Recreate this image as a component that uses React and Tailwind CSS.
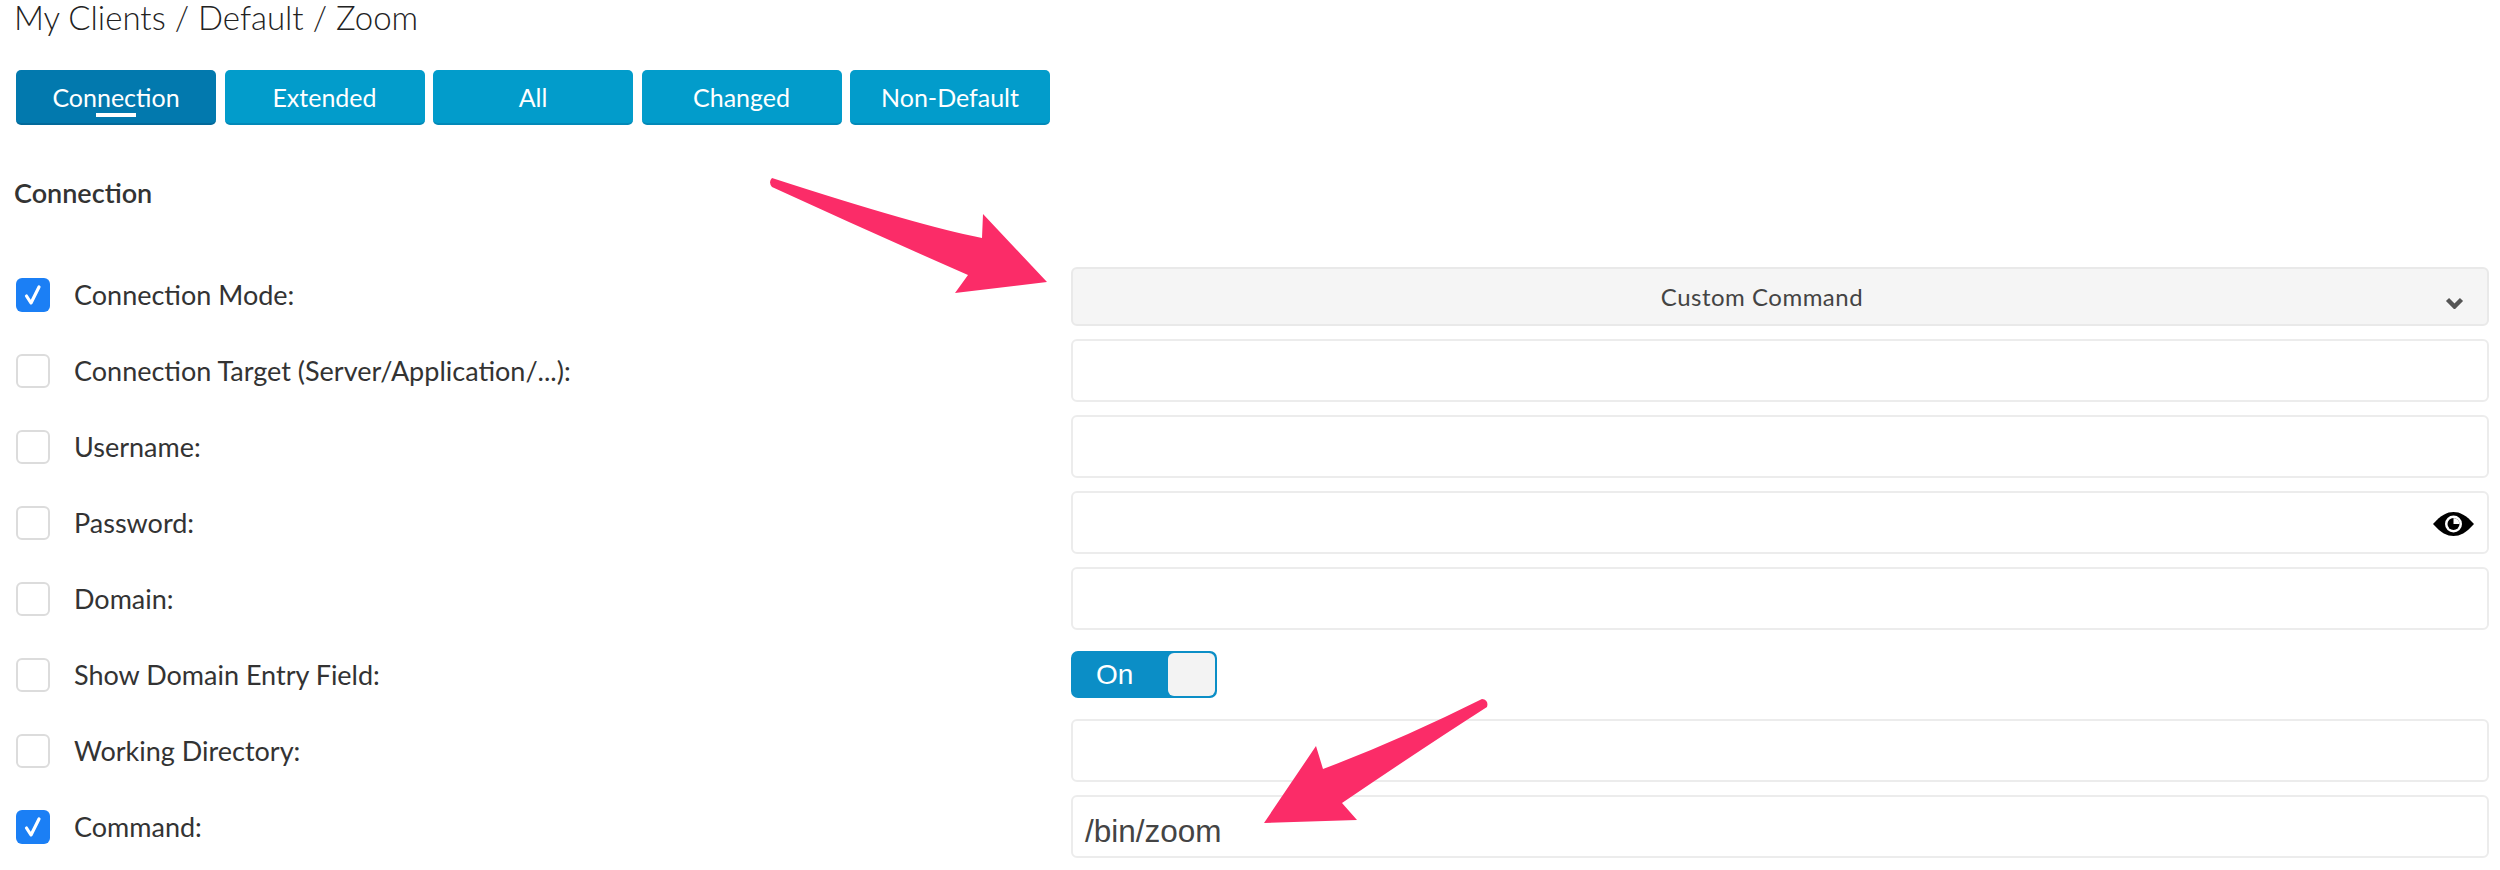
import React from "react";

const tabs = ["Connection", "Extended", "All", "Changed", "Non-Default"];

const Check = ({ checked }) => (
  <div
    className={`w-[34px] h-[34px] shrink-0 rounded-[6px] flex items-center justify-center ${
      checked ? "bg-[#1b7ff5]" : "bg-white border-2 border-[#dcdcdc]"
    }`}
  >
    {checked && (
      <svg width="20" height="22" viewBox="0 0 20 22" fill="none">
        <path d="M3.5 12 L8 19 L16 3" stroke="#fff" strokeWidth="3.2" strokeLinecap="round" strokeLinejoin="round" />
      </svg>
    )}
  </div>
);

const Field = ({ children }) => (
  <div className="h-[63px] flex-1 rounded-[6px] border-2 border-[#ececec] bg-white flex items-center relative">
    {children}
  </div>
);

const Row = ({ label, checked, children }) => (
  <div className="flex items-center h-[63px] mb-[13px]">
    <Check checked={checked} />
    <div className="w-[1021px] pl-[24px] shrink-0 text-[27px] leading-none text-[#333]">{label}</div>
    <div className="flex-1 flex items-center">{children}</div>
  </div>
);

const Eye = () => (
  <svg className="absolute right-[13px] top-[19px]" width="41" height="24" viewBox="0 0 41 24">
    <path d="M0 12 C8 3 14 0 20.5 0 C27 0 33 3 41 12 C33 21 27 24 20.5 24 C14 24 8 21 0 12 Z" fill="#000" />
    <circle cx="20.5" cy="12" r="8.5" fill="#fff" />
    <circle cx="20.5" cy="12" r="6" fill="#000" />
    <path d="M20.5 12 L20.5 6 A6 6 0 0 1 26.5 12 Z" fill="#fff" />
  </svg>
);

export default function App() {
  return (
    <div className="relative w-[2500px] h-[870px] overflow-hidden bg-white pl-[16px] pr-[11px] font-['Lato','Liberation_Sans',sans-serif]">
      <h1 className="h-[70px] -ml-[2px] text-[33px] leading-[35px] font-light text-[#222]">My Clients / Default / Zoom</h1>

      <div className="flex gap-[8.5px]">
        {tabs.map((t, i) => (
          <button
            key={t}
            className={`relative w-[200px] h-[55px] rounded-[5px] border-b-2 pt-[2px] text-[25px] text-white flex items-center justify-center ${
              i === 0 ? "bg-[#0279ae] border-[#02699a]" : "bg-[#029ccb] border-[#0289b8]"
            }`}
          >
            {t}
            {i === 0 && <span className="absolute left-[80px] top-[43px] w-[40px] h-[4px] bg-white" />}
          </button>
        ))}
      </div>

      <h2 className="mt-[53px] mb-[55px] -ml-[2px] text-[27px] leading-[30px] font-semibold text-[#333]">Connection</h2>

      <Row label="Connection Mode:" checked>
        <div className="h-[59px] mt-[4px] flex-1 rounded-[6px] border-2 border-[#e9e9e9] bg-[#f5f5f5] flex items-center justify-center pr-[36px] relative text-[24px] tracking-[0.5px] text-[#444]">
          Custom Command
          <svg className="absolute right-[23px] top-[28px]" width="19" height="12" viewBox="0 0 19 12" fill="none">
            <path d="M2.5 2.5 L9.5 9.5 L16.5 2.5" stroke="#555" strokeWidth="4.4" />
          </svg>
        </div>
      </Row>
      <Row label="Connection Target (Server/Application/...):"><Field /></Row>
      <Row label="Username:"><Field /></Row>
      <Row label="Password:">
        <Field>
          <Eye />
        </Field>
      </Row>
      <Row label="Domain:"><Field /></Row>
      <Row label="Show Domain Entry Field:">
        <div className="w-[146px] h-[47px] rounded-[7px] bg-[#0b8ec6] relative flex items-center pl-[25px] text-[28px] text-white font-['Liberation_Sans',sans-serif]">
          On
          <span className="absolute right-[2px] top-[2px] w-[47px] h-[43px] rounded-[6px] bg-[#f3f3f3]" />
        </div>
      </Row>
      <Row label="Working Directory:"><Field /></Row>
      <Row label="Command:" checked>
        <Field>
          <span className="pl-[12px] pt-[11px] text-[31.5px] text-[#444] font-['Liberation_Sans',sans-serif]">/bin/zoom</span>
        </Field>
      </Row>

      <svg className="absolute left-0 top-0 pointer-events-none" width="2500" height="870">
        <path
          d="M772 178 Q768 182 772 187 Q870 232 968 275 L955 293 L1047 282 L983 214 L982 238 Q920 226 772 178 Z"
          fill="#fb2c68"
        />
        <path
          d="M1482 699 Q1400 740 1323 769 L1316 746 L1264 823 L1357 820 L1342 803 Q1420 750 1487 707 Q1489 700 1482 699 Z"
          fill="#fb2c68"
        />
      </svg>
    </div>
  );
}
